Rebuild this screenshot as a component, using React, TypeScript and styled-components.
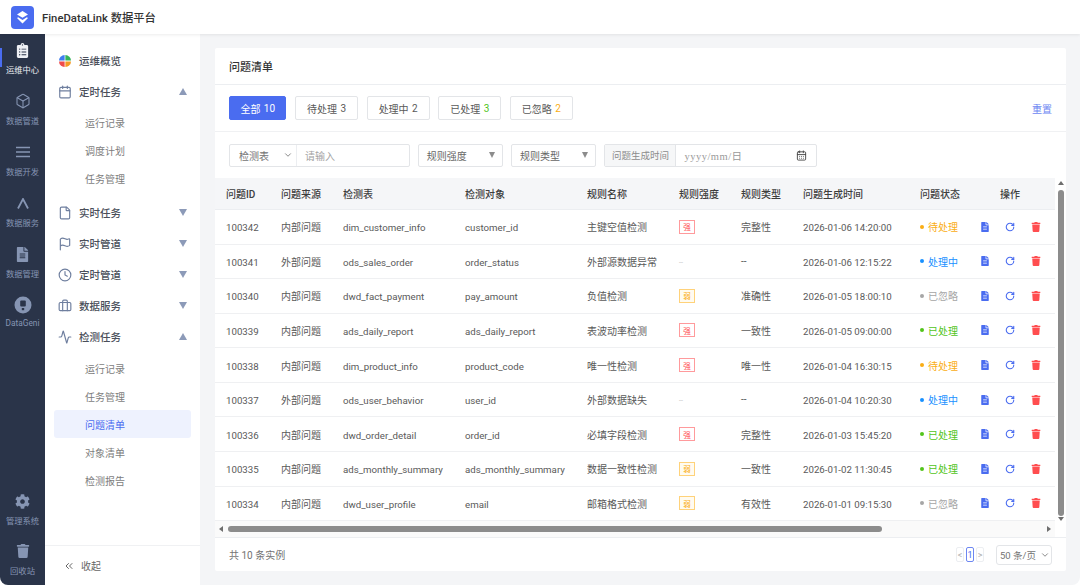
import React from 'react';
import styled, { createGlobalStyle } from 'styled-components';
import { Activity, Box, Briefcase, Calendar, CalendarDays, ChevronDown, ChevronsLeft, Clock, File, Flag, RotateCw } from 'lucide-react';
import { FaClipboardList, FaCog, FaFileAlt, FaTrash } from 'react-icons/fa';

const GlobalStyle = createGlobalStyle`
  html, body {
    margin: 0;
    height: 100%;
    background: #fff;
  }
  body {
    font-family: Roboto, "Noto Sans CJK SC", sans-serif;
    overflow: hidden;
  }
  * {
    box-sizing: border-box;
  }
`;

const Page = styled.div`
  width: 1080px;
  height: 585px;
  display: flex;
  flex-direction: column;
`;

const Header = styled.header`
  height: 34px;
  flex: none;
  display: flex;
  align-items: center;
  gap: 8px;
  padding-left: 11px;
  background: #fff;
  box-shadow: 0 1px 3px rgba(0, 0, 0, 0.08);
  position: relative;
  z-index: 1;
`;

const Logo = styled.div`
  width: 23px;
  height: 23px;
  border-radius: 4px;
  background: #4a6cf0;
  display: flex;
  align-items: center;
  justify-content: center;
`;

const Brand = styled.div`
  font-size: 11.3px;
  font-weight: 500;
  color: #333;
`;

const Body = styled.div`
  flex: 1;
  display: flex;
  min-height: 0;
`;

const Rail = styled.nav`
  width: 45px;
  flex: none;
  background: #2a3449;
  border-bottom-left-radius: 8px;
  display: flex;
  flex-direction: column;
`;

const RailSpacer = styled.div`
  flex: 1;
`;

const RailItem = styled.div<{ $active?: boolean }>`
  height: 51px;
  flex: none;
  display: flex;
  flex-direction: column;
  align-items: center;
  gap: 4px;
  padding-top: 7px;
  position: relative;
  font-size: 8.3px;
  white-space: nowrap;
  color: ${p => (p.$active ? '#eef0f5' : '#8695b3')};

  &::before {
    content: '';
    display: ${p => (p.$active ? 'block' : 'none')};
    position: absolute;
    left: 0;
    top: 14px;
    width: 2px;
    height: 19px;
    background: #4a6cf0;
  }
`;

const RailIconSlot = styled.div`
  height: 18px;
  display: flex;
  align-items: center;
  justify-content: center;
`;

const RailBottom = styled.div`
  display: flex;
  flex-direction: column;

  ${RailItem} {
    height: 50px;
  }
`;

const Sidebar = styled.aside`
  width: 155px;
  flex: none;
  background: #fff;
  display: flex;
  flex-direction: column;
`;

const SideNav = styled.div`
  flex: 1;
  padding: 11px 9px 0;
`;

const NavItem = styled.div`
  height: 31px;
  display: flex;
  align-items: center;
  gap: 7px;
  padding-left: 4px;
  padding-right: 4px;
  font-size: 10.5px;
  font-weight: 500;
  color: #4a4f5a;

  svg {
    flex: none;
    color: #6f7f9f;
  }
`;

const NavLabel = styled.span`
  flex: 1;
`;

const Caret = styled.span<{ $up?: boolean }>`
  width: 0;
  height: 0;
  border-left: 4px solid transparent;
  border-right: 4px solid transparent;
  ${p => (p.$up ? 'border-bottom' : 'border-top')}: 7px solid #8c9ab8;
`;

const SubGroup = styled.div<{ $tight?: boolean }>`
  padding: ${p => (p.$tight ? '1px 0 5px' : '2px 0 4px')};
`;

const SubItem = styled.div<{ $active?: boolean }>`
  height: 28px;
  display: flex;
  align-items: center;
  padding-left: 31px;
  border-radius: 3px;
  font-size: 10px;
  color: ${p => (p.$active ? '#4a6cf0' : '#7d7d7d')};
  background: ${p => (p.$active ? '#eef2fe' : 'transparent')};
`;

const Collapse = styled.div`
  height: 40px;
  flex: none;
  display: flex;
  align-items: center;
  gap: 6px;
  padding-left: 18px;
  border-top: 1px solid #f0f1f3;
  font-size: 10px;
  color: #666;
`;

const Main = styled.main`
  flex: 1;
  min-width: 0;
  background: #f4f5f7;
  border-bottom-right-radius: 8px;
  padding: 14px 14px 14px 15px;
  display: flex;
`;

const Card = styled.section`
  flex: 1;
  min-width: 0;
  background: #fff;
  border-radius: 2px;
  display: flex;
  flex-direction: column;
`;

const CardTitle = styled.div`
  height: 37px;
  flex: none;
  display: flex;
  align-items: center;
  padding-left: 14px;
  border-bottom: 1px solid #eceef1;
  font-size: 11px;
  font-weight: 500;
  color: #333;
`;

const TabBar = styled.div`
  height: 47px;
  flex: none;
  display: flex;
  align-items: center;
  gap: 8.6px;
  padding: 0 14px;
  border-bottom: 1px solid #f0f1f3;
`;

const Tab = styled.div<{ $active?: boolean }>`
  height: 24px;
  padding: 0 ${p => (p.$active ? '10.4px' : '11px')};
  display: flex;
  align-items: center;
  gap: 3.4px;
  border-radius: 2px;
  font-size: 10px;
  border: 1px solid ${p => (p.$active ? '#4a6cf0' : '#e3e5e8')};
  background: ${p => (p.$active ? '#4a6cf0' : '#fff')};
  color: ${p => (p.$active ? '#fff' : '#595959')};
`;

const TabCount = styled.span<{ $color?: string }>`
  color: ${p => p.$color || 'inherit'};
`;

const ResetLink = styled.span`
  margin-left: auto;
  font-size: 10px;
  color: #6d87f2;
`;

const FilterBar = styled.div`
  height: 46px;
  flex: none;
  display: flex;
  align-items: center;
  gap: 8.3px;
  padding: 0 14px;
`;

const FilterGroup = styled.div<{ $width: number }>`
  width: ${p => p.$width}px;
  height: 23px;
  display: flex;
  border: 1px solid #e3e5e8;
  border-radius: 2px;
  font-size: 10px;
  color: #595959;
`;

const GroupSelect = styled.div`
  width: 66px;
  flex: none;
  display: flex;
  align-items: center;
  justify-content: space-between;
  padding: 0 3px 0 9px;
  color: #737373;
`;

const GroupInput = styled.div`
  flex: 1;
  display: flex;
  align-items: center;
  padding-left: 8px;
  border-left: 1px solid #eceef1;
  color: #a3a3a3;
`;

const DropdownFilter = styled.div`
  width: 85px;
  height: 23px;
  display: flex;
  align-items: center;
  justify-content: space-between;
  padding: 0 7px 0 8px;
  border: 1px solid #e3e5e8;
  border-radius: 2px;
  font-size: 10px;
  color: #666;
`;

const SmallCaret = styled.span`
  width: 0;
  height: 0;
  border-left: 3.5px solid transparent;
  border-right: 3.5px solid transparent;
  border-top: 6px solid #8c8c8c;
`;

const DateLabel = styled.div`
  width: 71px;
  flex: none;
  display: flex;
  align-items: center;
  justify-content: center;
  background: #f6f7f8;
  border-right: 1px solid #e3e5e8;
  font-size: 9.5px;
  color: #8c8c8c;
`;

const DateInput = styled.div`
  flex: 1;
  display: flex;
  align-items: center;
  justify-content: space-between;
  padding: 0 9px 0 8px;
  font-family: "Liberation Serif", "Noto Sans CJK SC", serif;
  font-size: 10.5px;
  letter-spacing: 0.5px;
  color: #9a9a9a;

  svg {
    color: #444;
  }
`;

const TableArea = styled.div`
  flex: 1;
  min-height: 0;
  display: flex;
`;

const TableMain = styled.div`
  flex: 1;
  min-width: 0;
  display: flex;
  flex-direction: column;
`;

const columns = '55px 62px 122px 122px 92px 62px 62px 117px 55px 70px';

const HeadRow = styled.div`
  height: 32px;
  flex: none;
  display: grid;
  grid-template-columns: ${columns};
  align-items: center;
  padding-left: 11px;
  background: #f5f6f8;
  border-bottom: 1px solid #eceef1;
  font-size: 10px;
  font-weight: 500;
  color: #3d3d3d;
`;

const Rows = styled.div`
  flex: 1;
  min-height: 0;
  display: flex;
  flex-direction: column;
`;

const Row = styled.div`
  flex: 1;
  display: grid;
  grid-template-columns: ${columns};
  align-items: center;
  padding-left: 11px;
  border-bottom: 1px solid #eff0f2;
  font-size: 10px;
  color: #595959;
  white-space: nowrap;
`;

const LatinCell = styled.span`
  font-size: 9.7px;
  padding-top: 2px;
`;

const Badge = styled.span<{ $level: string }>`
  width: 16px;
  height: 14px;
  display: flex;
  align-items: center;
  justify-content: center;
  font-size: 7.5px;
  border: 1px solid ${p => (p.$level === '强' ? '#ff9a9c' : '#ffd27a')};
  color: ${p => (p.$level === '强' ? '#ff4d4f' : '#faad14')};
  background: ${p => (p.$level === '强' ? '#fff' : '#fffbf0')};
`;

const NoBadge = styled.span`
  font-size: 7px;
  color: #c4c4c4;
`;

const statusColors: Record<string, string> = {
  待处理: '#faad14',
  处理中: '#1890ff',
  已处理: '#52c41a',
  已忽略: '#a6a6a6',
};

const Status = styled.span<{ $status: string }>`
  display: flex;
  align-items: center;
  gap: 4px;
  color: ${p => statusColors[p.$status]};

  &::before {
    content: '';
    width: 4px;
    height: 4px;
    border-radius: 50%;
    background: currentColor;
  }
`;

const Actions = styled.div`
  display: flex;
  justify-content: center;
  align-items: center;
  gap: 15.5px;
`;

const HeadCenter = styled.span`
  text-align: center;
`;

const HScroll = styled.div`
  height: 16px;
  flex: none;
  display: flex;
  align-items: center;
  background: #fafafa;
  padding: 0 4px;
`;

const Thumb = styled.div`
  background: #8c8c8c;
  border-radius: 3px;
`;

const HThumb = styled(Thumb)`
  height: 6px;
  width: 654px;
  margin-left: 5px;
`;

const VScroll = styled.div`
  width: 11px;
  flex: none;
  display: flex;
  flex-direction: column;
  align-items: center;
  padding-top: 3px;
`;

const VThumb = styled(Thumb)`
  width: 6px;
  height: 326px;
  margin: 5px 0 1px;
`;

const Arrow = styled.span<{ $dir: 'up' | 'down' | 'left' | 'right' }>`
  width: 0;
  height: 0;
  flex: none;
  ${p => {
    const side = { up: 'bottom', down: 'top', left: 'right', right: 'left' }[p.$dir];
    const across = p.$dir === 'up' || p.$dir === 'down' ? ['left', 'right'] : ['top', 'bottom'];
    return `
      border-${side}: 4px solid #6e6e6e;
      border-${across[0]}: 3px solid transparent;
      border-${across[1]}: 3px solid transparent;
    `;
  }}
`;

const HArrowEnd = styled.span`
  margin-left: auto;
  display: flex;
`;

const Footer = styled.div`
  height: 34px;
  flex: none;
  display: flex;
  align-items: center;
  padding: 0 14px;
  border-top: 1px solid #eceef1;
  font-size: 10px;
  color: #737373;
`;

const Pager = styled.div`
  margin-left: auto;
  display: flex;
  align-items: center;
  gap: 2px;
`;

const PageButton = styled.span<{ $active?: boolean }>`
  width: 8px;
  height: 15px;
  display: flex;
  align-items: center;
  justify-content: center;
  border-radius: 2px;
  font-size: 9px;
  border: 1px solid ${p => (p.$active ? '#6d87f2' : '#eceef1')};
  color: ${p => (p.$active ? '#4a6cf0' : '#b0b0b0')};
`;

const PageSize = styled.div`
  width: 56px;
  height: 20px;
  margin-left: 10px;
  display: flex;
  align-items: center;
  justify-content: space-between;
  padding: 0 1px 0 3px;
  border: 1px solid #e3e5e8;
  border-radius: 3px;
  color: #737373;
  font-size: 9.5px;
  white-space: nowrap;
`;

const DataIcon = () => (
  <svg width="18" height="18" viewBox="0 0 18 18">
    <circle cx="9" cy="9" r="8.5" fill="#8695b3" />
    <rect x="6.2" y="4.5" width="5.6" height="6" rx="1" fill="#2a3449" />
    <rect x="7.8" y="12" width="2.4" height="2.2" fill="#2a3449" />
  </svg>
);

const LinesIcon = () => (
  <svg width="14" height="14" viewBox="0 0 14 14" fill="none" stroke="#8695b3" strokeWidth="1.4">
    <path d="M0 2.5h14M0 7h14M0 11.5h14" />
  </svg>
);

const PeakIcon = () => (
  <svg width="12" height="11" viewBox="0 0 12 11" fill="none" stroke="#8695b3" strokeWidth="1.8">
    <path d="M1 10.5 6 1l5 9.5" />
  </svg>
);

const PieIcon = () => (
  <svg width="14" height="14" viewBox="-1 -1 14 14">
    <path d="M5.6 0v5.6H0A5.6 5.6 0 0 1 5.6 0z" fill="#3f7df0" />
    <path d="M6.4 0A5.6 5.6 0 0 1 12 5.6H6.4z" fill="#34b35a" />
    <path d="M0 6.4h5.6V12A5.6 5.6 0 0 1 0 6.4z" fill="#ef4b4b" />
    <path d="M6.4 6.4H12A5.6 5.6 0 0 1 6.4 12z" fill="#f59a23" />
  </svg>
);

const LogoIcon = () => (
  <svg width="15" height="15" viewBox="0 0 15 15" fill="#fff">
    <path d="M7.5 1 13 4.4 7.5 7.8 2 4.4z" />
    <path d="M3.2 7.2 7.5 9.9l4.3-2.7L13 8l-5.5 5.6L2 8z" />
  </svg>
);

const railItems = [
  { label: '数据管道', icon: <Box size={16} strokeWidth={1.6} /> },
  { label: '数据开发', icon: <LinesIcon /> },
  { label: '数据服务', icon: <PeakIcon /> },
  { label: '数据管理', icon: <FaFileAlt size={15} /> },
  { label: 'DataGeni', icon: <DataIcon /> },
];

const issues = [
  ['100342', '内部问题', 'dim_customer_info', 'customer_id', '主键空值检测', '强', '完整性', '2026-01-06 14:20:00', '待处理'],
  ['100341', '外部问题', 'ods_sales_order', 'order_status', '外部源数据异常', '', '--', '2026-01-06 12:15:22', '处理中'],
  ['100340', '内部问题', 'dwd_fact_payment', 'pay_amount', '负值检测', '弱', '准确性', '2026-01-05 18:00:10', '已忽略'],
  ['100339', '内部问题', 'ads_daily_report', 'ads_daily_report', '表波动率检测', '强', '一致性', '2026-01-05 09:00:00', '已处理'],
  ['100338', '内部问题', 'dim_product_info', 'product_code', '唯一性检测', '强', '唯一性', '2026-01-04 16:30:15', '待处理'],
  ['100337', '外部问题', 'ods_user_behavior', 'user_id', '外部数据缺失', '', '--', '2026-01-04 10:20:30', '处理中'],
  ['100336', '内部问题', 'dwd_order_detail', 'order_id', '必填字段检测', '强', '完整性', '2026-01-03 15:45:20', '已处理'],
  ['100335', '内部问题', 'ads_monthly_summary', 'ads_monthly_summary', '数据一致性检测', '弱', '一致性', '2026-01-02 11:30:45', '已处理'],
  ['100334', '内部问题', 'dwd_user_profile', 'email', '邮箱格式检测', '弱', '有效性', '2026-01-01 09:15:30', '已忽略'],
];

const headers = ['问题ID', '问题来源', '检测表', '检测对象', '规则名称', '规则强度', '规则类型', '问题生成时间', '问题状态'];

const IssueRow = ({ issue }: { issue: string[] }) => {
  const [id, source, table, target, rule, level, type, time, status] = issue;
  return (
    <Row>
      <LatinCell>{id}</LatinCell>
      <span>{source}</span>
      <LatinCell>{table}</LatinCell>
      <LatinCell>{target}</LatinCell>
      <span>{rule}</span>
      <span>{level ? <Badge $level={level}>{level}</Badge> : <NoBadge>--</NoBadge>}</span>
      <span>{type}</span>
      <LatinCell>{time}</LatinCell>
      <Status $status={status}>{status}</Status>
      <Actions>
        <FaFileAlt size={10} color="#4a6cf0" />
        <RotateCw size={10} color="#4a6cf0" strokeWidth={2.6} />
        <FaTrash size={10} color="#ff4d4f" />
      </Actions>
    </Row>
  );
};

const App = () => (
  <Page>
    <GlobalStyle />
    <Header>
      <Logo>
        <LogoIcon />
      </Logo>
      <Brand>FineDataLink 数据平台</Brand>
    </Header>
    <Body>
      <Rail>
        <RailItem $active>
          <RailIconSlot>
            <FaClipboardList size={15} />
          </RailIconSlot>
          运维中心
        </RailItem>
        {railItems.map(item => (
          <RailItem key={item.label}>
            <RailIconSlot>{item.icon}</RailIconSlot>
            {item.label}
          </RailItem>
        ))}
        <RailSpacer />
        <RailBottom>
          <RailItem>
            <RailIconSlot>
              <FaCog size={15} />
            </RailIconSlot>
            管理系统
          </RailItem>
          <RailItem>
            <RailIconSlot>
              <FaTrash size={14} />
            </RailIconSlot>
            回收站
          </RailItem>
        </RailBottom>
      </Rail>
      <Sidebar>
        <SideNav>
          <NavItem>
            <PieIcon />
            <NavLabel>运维概览</NavLabel>
          </NavItem>
          <NavItem>
            <Calendar size={14} />
            <NavLabel>定时任务</NavLabel>
            <Caret $up />
          </NavItem>
          <SubGroup $tight>
            <SubItem>运行记录</SubItem>
            <SubItem>调度计划</SubItem>
            <SubItem>任务管理</SubItem>
          </SubGroup>
          <NavItem>
            <File size={14} />
            <NavLabel>实时任务</NavLabel>
            <Caret />
          </NavItem>
          <NavItem>
            <Flag size={14} />
            <NavLabel>实时管道</NavLabel>
            <Caret />
          </NavItem>
          <NavItem>
            <Clock size={14} />
            <NavLabel>定时管道</NavLabel>
            <Caret />
          </NavItem>
          <NavItem>
            <Briefcase size={14} />
            <NavLabel>数据服务</NavLabel>
            <Caret />
          </NavItem>
          <NavItem>
            <Activity size={14} />
            <NavLabel>检测任务</NavLabel>
            <Caret $up />
          </NavItem>
          <SubGroup>
            <SubItem>运行记录</SubItem>
            <SubItem>任务管理</SubItem>
            <SubItem $active>问题清单</SubItem>
            <SubItem>对象清单</SubItem>
            <SubItem>检测报告</SubItem>
          </SubGroup>
        </SideNav>
        <Collapse>
          <ChevronsLeft size={12} />
          收起
        </Collapse>
      </Sidebar>
      <Main>
        <Card>
          <CardTitle>问题清单</CardTitle>
          <TabBar>
            <Tab $active>
              全部 <TabCount>10</TabCount>
            </Tab>
            <Tab>
              待处理 <TabCount>3</TabCount>
            </Tab>
            <Tab>
              处理中 <TabCount>2</TabCount>
            </Tab>
            <Tab>
              已处理 <TabCount $color="#52c41a">3</TabCount>
            </Tab>
            <Tab>
              已忽略 <TabCount $color="#faad14">2</TabCount>
            </Tab>
            <ResetLink>重置</ResetLink>
          </TabBar>
          <FilterBar>
            <FilterGroup $width={180.5}>
              <GroupSelect>
                检测表
                <ChevronDown size={10} />
              </GroupSelect>
              <GroupInput>请输入</GroupInput>
            </FilterGroup>
            <DropdownFilter>
              规则强度
              <SmallCaret />
            </DropdownFilter>
            <DropdownFilter>
              规则类型
              <SmallCaret />
            </DropdownFilter>
            <FilterGroup $width={213}>
              <DateLabel>问题生成时间</DateLabel>
              <DateInput>
                yyyy/mm/日
                <CalendarDays size={11} />
              </DateInput>
            </FilterGroup>
          </FilterBar>
          <TableArea>
            <TableMain>
              <HeadRow>
                {headers.map(title => (
                  <span key={title}>{title}</span>
                ))}
                <HeadCenter>操作</HeadCenter>
              </HeadRow>
              <Rows>
                {issues.map(issue => (
                  <IssueRow key={issue[0]} issue={issue} />
                ))}
              </Rows>
              <HScroll>
                <Arrow $dir="left" />
                <HThumb />
                <HArrowEnd>
                  <Arrow $dir="right" />
                </HArrowEnd>
              </HScroll>
            </TableMain>
            <VScroll>
              <Arrow $dir="up" />
              <VThumb />
              <Arrow $dir="down" />
            </VScroll>
          </TableArea>
          <Footer>
            共 10 条实例
            <Pager>
              <PageButton>&lt;</PageButton>
              <PageButton $active>1</PageButton>
              <PageButton>&gt;</PageButton>
              <PageSize>
                50 条/页
                <ChevronDown size={10} />
              </PageSize>
            </Pager>
          </Footer>
        </Card>
      </Main>
    </Body>
  </Page>
);

export default App;
